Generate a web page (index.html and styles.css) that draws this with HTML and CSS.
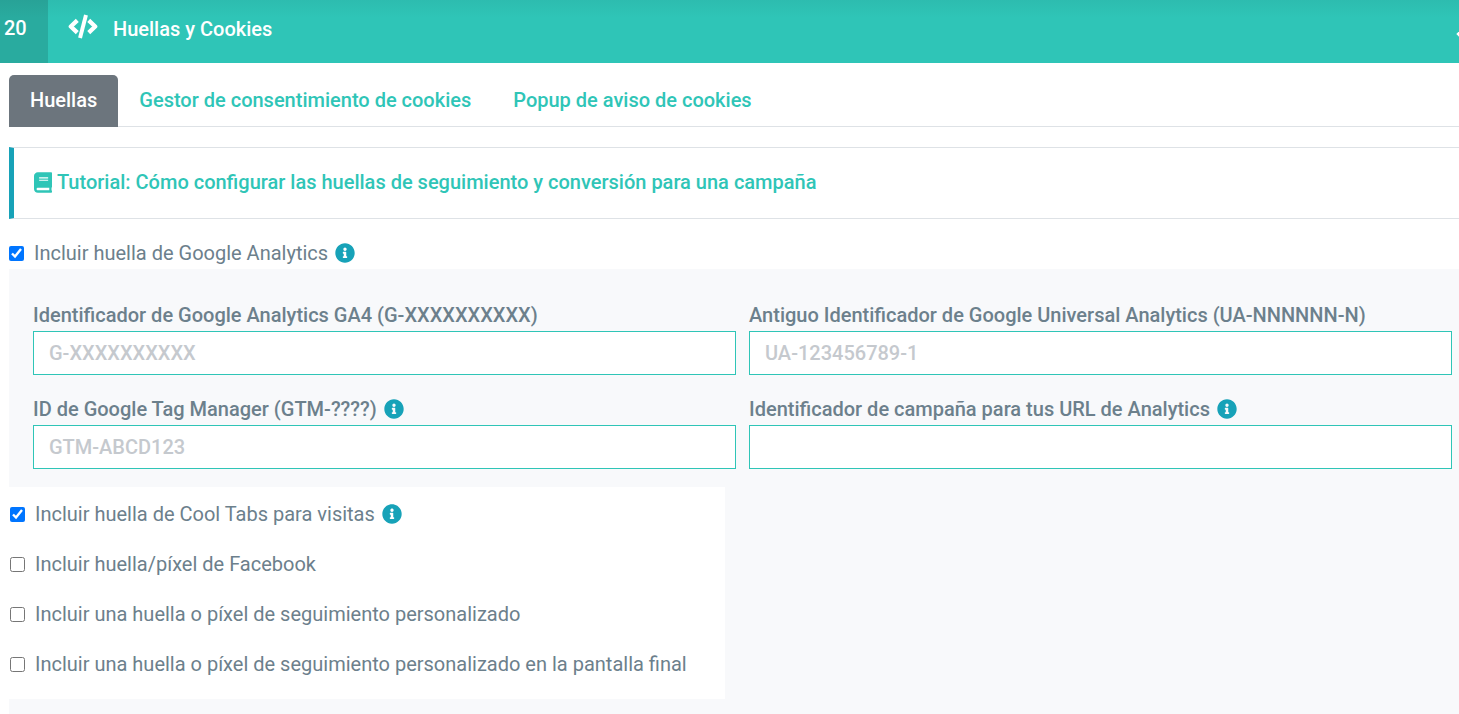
FILE: index.html
```
<!DOCTYPE html>
<html lang="es">
<head>
	<meta charset="UTF-8">
	<title>Huellas y Cookies</title>
	<link rel="stylesheet" href="styles.css">
</head>
<body>
<!-- info icon -->
<svg class="sprite" aria-hidden="true">
	<symbol id="info" viewBox="0 0 512 512">
		<path fill="currentColor" d="M256 8C119 8 8 119 8 256s111 248 248 248 248-111 248-248S393 8 256 8zm0 110c23.200 0 42 18.800 42 42s-18.800 42-42 42-42-18.800-42-42 18.800-42 42-42zm56 254c0 6.600-5.400 12-12 12h-88c-6.600 0-12-5.400-12-12v-24c0-6.600 5.400-12 12-12h12v-64h-12c-6.600 0-12-5.400-12-12v-24c0-6.600 5.400-12 12-12h64c6.600 0 12 5.400 12 12v100h12c6.600 0 12 5.400 12 12v24z"/>
	</symbol>
</svg>

<!-- header -->
<header class="header">
	<span class="step">20</span>
	<h1 class="title">
		<svg class="code" viewBox="0 0 640 512" aria-hidden="true">
			<path fill="none" stroke="currentColor" stroke-width="92" stroke-linejoin="round" d="M198 126L60 256l138 130M442 126l138 130-138 130"/>
			<path fill="none" stroke="currentColor" stroke-width="84" stroke-linejoin="round" d="M384 10L256 502"/>
		</svg>
		Huellas y Cookies
	</h1>
	<span class="collapse"></span>
</header>

<main class="content">
	<nav class="tabs">
		<a class="tab active" href="#huellas">Huellas</a>
		<a class="tab" href="#gestor">Gestor de consentimiento de cookies</a>
		<a class="tab" href="#popup">Popup de aviso de cookies</a>
	</nav>

	<div class="callout">
		<a href="#tutorial">
			<svg class="book" viewBox="0 0 448 512" aria-hidden="true">
				<path fill="currentColor" fill-rule="evenodd" d="M448 360V24c0-13.300-10.700-24-24-24H96C43 0 0 43 0 96v320c0 53 43 96 96 96h328c13.300 0 24-10.700 24-24v-16c0-7.500-3.500-14.300-8.900-18.700-4.200-15.400-4.200-59.300 0-74.700 5.400-4.300 8.900-11.100 8.900-18.600zM128 154h224v-26H128v26zm0 58h224v-26H128v26zm253.400 236H96c-17.700 0-32-14.300-32-32s14.300-32 32-32h285.400c-1.900 17.100-1.900 46.900 0 64z"/>
			</svg>
			Tutorial: Cómo configurar las huellas de seguimiento y conversión para una campaña
		</a>
	</div>

	<div class="check">
		<input type="checkbox" id="analytics" checked>
		<label for="analytics">Incluir huella de Google Analytics</label>
		<svg class="info"><use href="#info"/></svg>
	</div>

	<section class="panel">
		<div class="fields">
			<div class="field">
				<label for="ga4">Identificador de Google Analytics GA4 (G-XXXXXXXXXX)</label>
				<input type="text" id="ga4" placeholder="G-XXXXXXXXXX">
			</div>
			<div class="field">
				<label for="ua">Antiguo Identificador de Google Universal Analytics (UA-NNNNNN-N)</label>
				<input type="text" id="ua" placeholder="UA-123456789-1">
			</div>
			<div class="field">
				<label for="gtm">ID de Google Tag Manager (GTM-????) <svg class="info"><use href="#info"/></svg></label>
				<input type="text" id="gtm" placeholder="GTM-ABCD123">
			</div>
			<div class="field">
				<label for="campaign">Identificador de campaña para tus URL de Analytics <svg class="info"><use href="#info"/></svg></label>
				<input type="text" id="campaign">
			</div>
		</div>

		<!-- other pixels -->
		<div class="options">
			<div class="check">
				<input type="checkbox" id="cooltabs" checked>
				<label for="cooltabs">Incluir huella de Cool Tabs para visitas</label>
				<svg class="info"><use href="#info"/></svg>
			</div>
			<div class="check">
				<input type="checkbox" id="facebook">
				<label for="facebook">Incluir huella/píxel de Facebook</label>
			</div>
			<div class="check">
				<input type="checkbox" id="custom">
				<label for="custom">Incluir una huella o píxel de seguimiento personalizado</label>
			</div>
			<div class="check">
				<input type="checkbox" id="final">
				<label for="final">Incluir una huella o píxel de seguimiento personalizado en la pantalla final</label>
			</div>
		</div>
	</section>
</main>
</body>
</html>
```
FILE: styles.css
```
* {
	box-sizing: border-box;
}

body {
	margin: 0;
	background-color: #fff;
	color: #6c808c;
	font-family: Roboto, "Liberation Sans", sans-serif;
	font-size: 20px;
	line-height: 30px;
}

a {
	color: #2fc5b7;
	text-decoration: none;
}

.sprite {
	display: none;
}

/* header */
.header {
	display: flex;
	height: 63px;
	overflow: hidden;
	color: #fff;
	font-weight: 500;
	background: linear-gradient(#2dbcaf, #2fc5b7 18px);
}

.step {
	width: 48px;
	padding: 13px 4px;
	background: linear-gradient(#28a297, #29ab9f 18px);
}

.title {
	display: flex;
	flex: 1;
	gap: 15px;
	margin: 0;
	padding: 14px 20px;
	font-size: 20px;
	font-weight: 500;
}

.code {
	width: 30px;
	height: 25px;
}

.collapse {
	align-self: center;
	width: 8px;
	height: 8px;
	margin: 4px -7px 0 0;
	background-color: #fff;
	transform: rotate(45deg);
}

.content {
	padding: 12px 0 0 9px;
}

/* tabs */
.tabs {
	display: flex;
	border-bottom: 1px solid #dee2e6;
}

.tab {
	margin-bottom: -1px;
	padding: 10px 21px 12px;
	border-radius: 5px 5px 0 0;
	font-weight: 500;
}

.tab.active {
	color: #fff;
	background-color: #6c757d;
}

.callout {
	margin: 20px 0 19px;
	padding: 19px 20px 21px;
	border: 1px solid #dee2e6;
	border-left: 5px solid #17a2b8;
	border-right: 0;
	font-weight: 500;
}

.callout a {
	display: flex;
	align-items: center;
	gap: 5px;
}

.book {
	width: 18px;
	height: 21px;
}

/* checkbox rows */
.check {
	display: flex;
	align-items: center;
	font-weight: 400;
}

.check input {
	width: 15px;
	height: 15px;
	margin: 0 10px 0 0;
	accent-color: #0075ff;
}

.info {
	width: 20px;
	height: 20px;
	margin-left: 7px;
	color: #17a2b8;
}

/* form */
.panel {
	margin-top: 1px;
	padding: 31px 0 40px;
	background-color: #f8f9fb;
}

.fields {
	display: grid;
	grid-template-columns: 1fr 1fr;
	gap: 19px 13px;
	padding: 0 7px 18px 24px;
}

.field label {
	display: flex;
	align-items: center;
	margin-bottom: 1px;
	font-weight: 500;
}

.field input {
	display: block;
	width: 100%;
	height: 44px;
	padding: 0 15px;
	border: 1px solid #2fc5b7;
	background-color: #fff;
	color: #6c808c;
	font: inherit;
	font-weight: 500;
}

.field input::placeholder {
	color: #c5c9ce;
}

.options {
	display: flex;
	flex-direction: column;
	gap: 20px;
	width: 50%;
	margin-left: -9px;
	padding: 12px 0 20px 10px;
	background-color: #fff;
}
```
